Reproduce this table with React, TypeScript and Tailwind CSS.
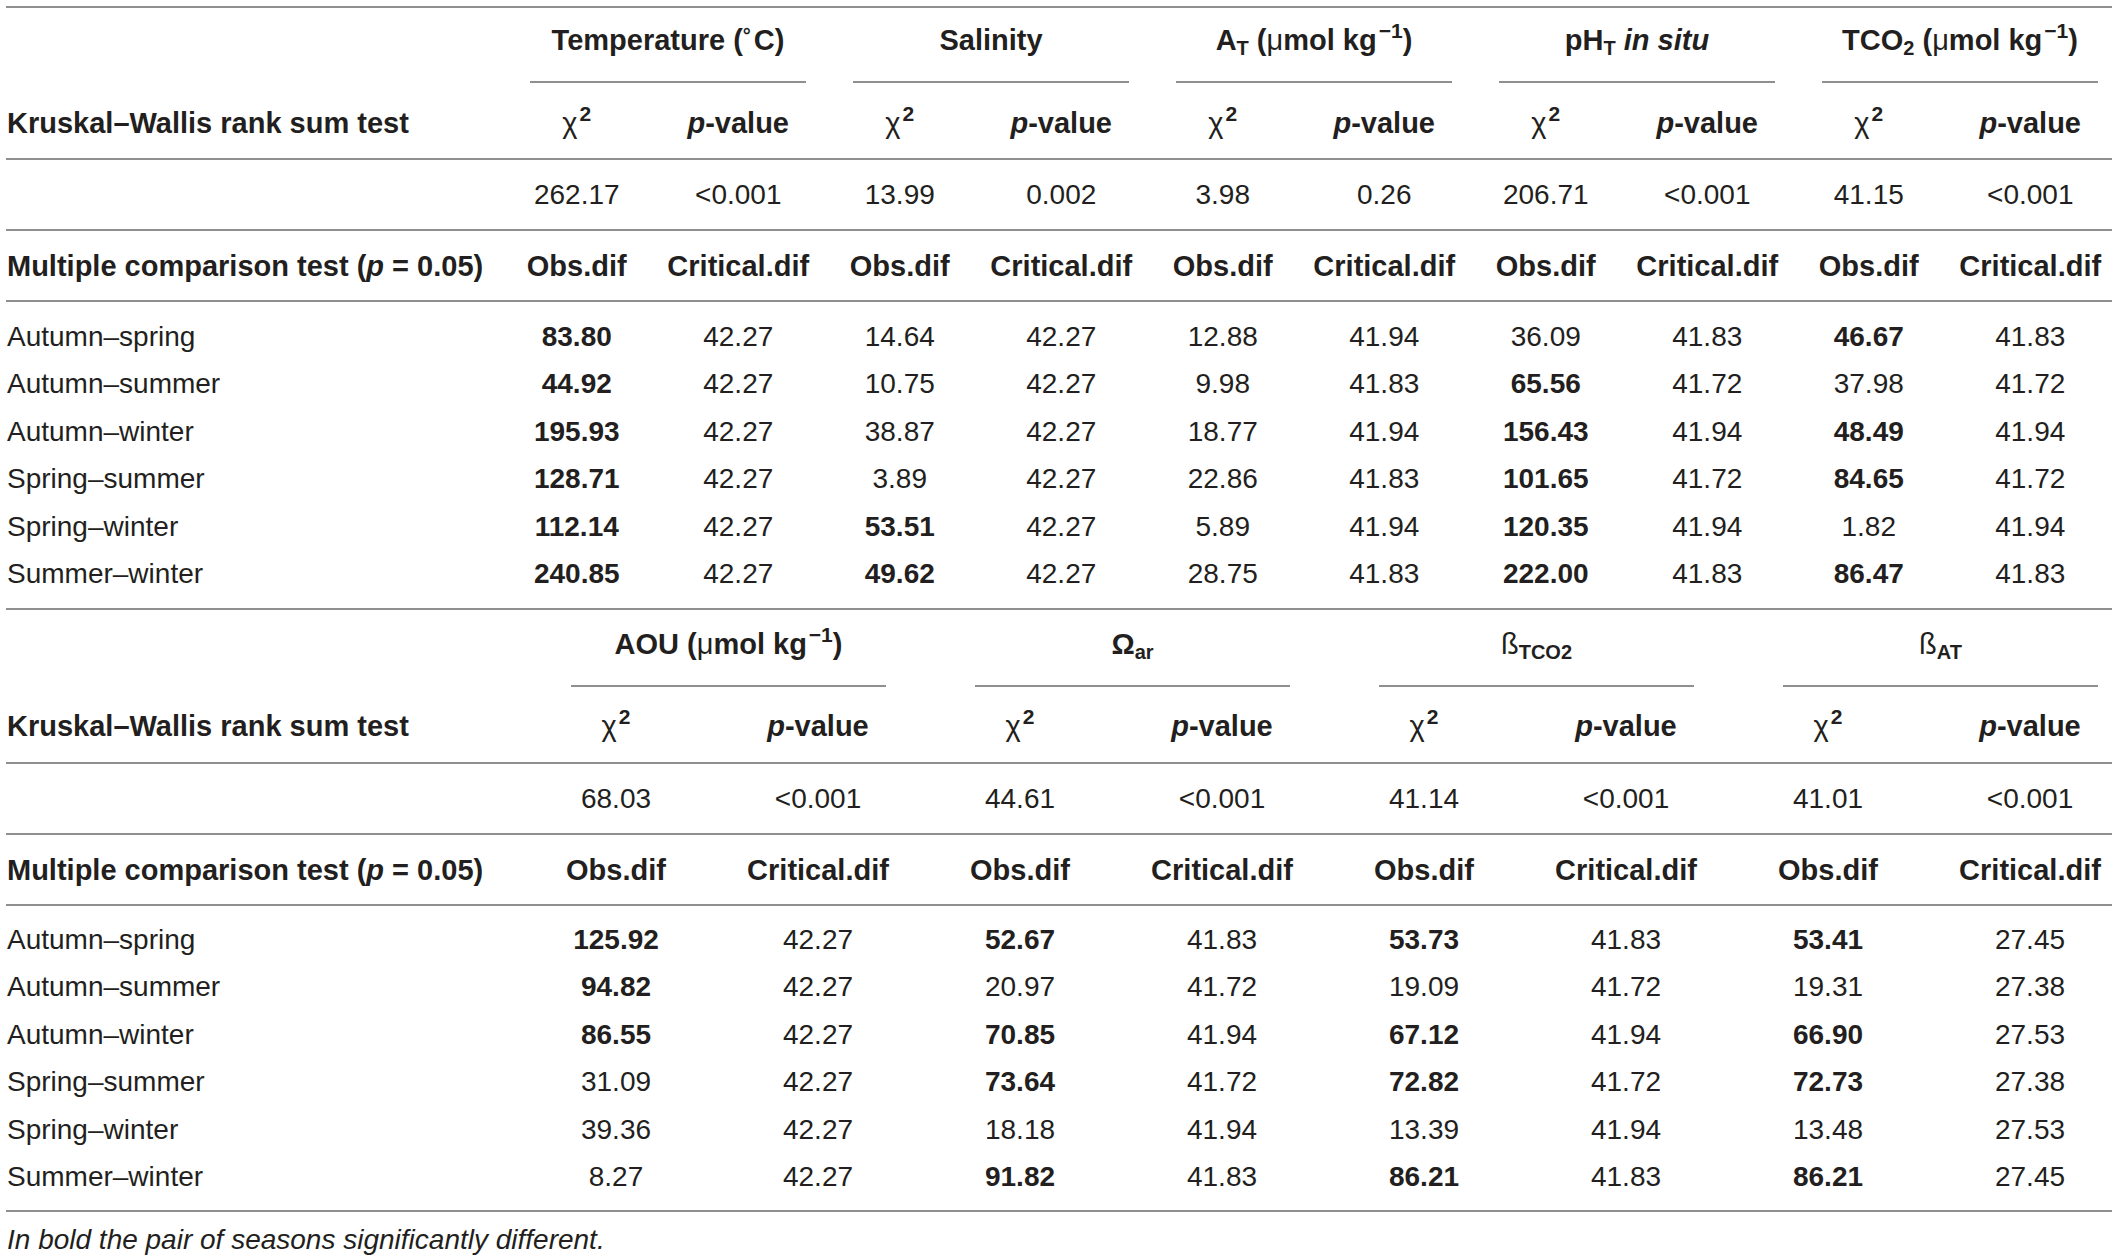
import type { ReactNode } from "react";

// "*" in front of a value = significant pair, printed bold
const kw1 = ["262.17", "<0.001", "13.99", "0.002", "3.98", "0.26", "206.71", "<0.001", "41.15", "<0.001"];
const rows1: [string, string[]][] = [
  ["Autumn–spring", ["*83.80", "42.27", "14.64", "42.27", "12.88", "41.94", "36.09", "41.83", "*46.67", "41.83"]],
  ["Autumn–summer", ["*44.92", "42.27", "10.75", "42.27", "9.98", "41.83", "*65.56", "41.72", "37.98", "41.72"]],
  ["Autumn–winter", ["*195.93", "42.27", "38.87", "42.27", "18.77", "41.94", "*156.43", "41.94", "*48.49", "41.94"]],
  ["Spring–summer", ["*128.71", "42.27", "3.89", "42.27", "22.86", "41.83", "*101.65", "41.72", "*84.65", "41.72"]],
  ["Spring–winter", ["*112.14", "42.27", "*53.51", "42.27", "5.89", "41.94", "*120.35", "41.94", "1.82", "41.94"]],
  ["Summer–winter", ["*240.85", "42.27", "*49.62", "42.27", "28.75", "41.83", "*222.00", "41.83", "*86.47", "41.83"]],
];

const kw2 = ["68.03", "<0.001", "44.61", "<0.001", "41.14", "<0.001", "41.01", "<0.001"];
const rows2: [string, string[]][] = [
  ["Autumn–spring", ["*125.92", "42.27", "*52.67", "41.83", "*53.73", "41.83", "*53.41", "27.45"]],
  ["Autumn–summer", ["*94.82", "42.27", "20.97", "41.72", "19.09", "41.72", "19.31", "27.38"]],
  ["Autumn–winter", ["*86.55", "42.27", "*70.85", "41.94", "*67.12", "41.94", "*66.90", "27.53"]],
  ["Spring–summer", ["31.09", "42.27", "*73.64", "41.72", "*72.82", "41.72", "*72.73", "27.38"]],
  ["Spring–winter", ["39.36", "42.27", "18.18", "41.94", "13.39", "41.94", "13.48", "27.53"]],
  ["Summer–winter", ["8.27", "42.27", "*91.82", "41.83", "*86.21", "41.83", "*86.21", "27.45"]],
];

const Sub = ({ children }: { children: ReactNode }) => (
  <sub className="text-[20px] relative top-[5px] align-baseline">{children}</sub>
);
const Sup = ({ children }: { children: ReactNode }) => (
  <sup className="text-[21px] relative -top-[12px] align-baseline ml-[2px]">{children}</sup>
);
const Mu = () => <span className="font-normal">μ</span>;

const Chi = () => (
  <span>
    <span className="font-normal">χ</span>
    <Sup>2</Sup>
  </span>
);
const PValue = () => (
  <span>
    <i>p</i>-value
  </span>
);

function Val({ v }: { v: string }) {
  const bold = v.startsWith("*");
  return (
    <div className={bold ? "text-center font-bold" : "text-center"}>
      {bold ? v.slice(1) : v}
    </div>
  );
}

function Group({ label, wide }: { label: ReactNode; wide?: boolean }) {
  return (
    <div className="col-span-2 flex flex-col justify-between h-full">
      <div className={wide ? "text-center font-bold pt-[17px] pl-[23px]" : "text-center font-bold pt-[15px] pl-[21px]"}>
        {label}
      </div>
      <div
        className={
          wide
            ? "h-[2px] bg-[#8f8f8f] ml-[56px] mr-[33px]"
            : "h-[2px] bg-[#8f8f8f] ml-[34px] mr-[13px]"
        }
      />
    </div>
  );
}

function Block({
  cols,
  groups,
  kw,
  rows,
  wide,
}: {
  cols: string;
  groups: ReactNode[];
  kw: string[];
  rows: [string, string[]][];
  wide?: boolean;
}) {
  const n = kw.length / 2;
  return (
    <>
      {/* group headers */}
      <div className={`${cols} text-[29px] ${wide ? "h-[77px]" : "h-[75px]"}`}>
        <div />
        {groups.map((g, i) => (
          <Group key={i} label={g} wide={wide} />
        ))}
      </div>

      {/* chi2 / p-value */}
      <div className={`${cols} items-center h-[77px] border-b-2 border-[#8f8f8f] font-bold text-[29px] ${wide ? "pt-[3px]" : "pt-[5px]"}`}>
        <div className="pl-[1px]">Kruskal–Wallis rank sum test</div>
        {Array.from({ length: n }).map((_, i) => [
          <div key={`c${i}`} className="text-center">
            <Chi />
          </div>,
          <div key={`p${i}`} className="text-center">
            <PValue />
          </div>,
        ])}
      </div>

      {/* KW values */}
      <div className={`${cols} items-center h-[71px] border-b-2 border-[#8f8f8f]`}>
        <div />
        {kw.map((v, i) => (
          <Val key={i} v={v} />
        ))}
      </div>

      {/* comparison header */}
      <div className={`${cols} items-center h-[71px] border-b-2 border-[#8f8f8f] font-bold text-[29px]`}>
        <div className="pl-[1px]">
          Multiple comparison test (<i>p</i> = 0.05)
        </div>
        {Array.from({ length: n }).map((_, i) => [
          <div key={`o${i}`} className="text-center">
            Obs.dif
          </div>,
          <div key={`c${i}`} className="text-center">
            Critical.dif
          </div>,
        ])}
      </div>

      {/* data */}
      <div className={`border-b-2 border-[#8f8f8f] ${wide ? "pt-[10px] pb-[9px]" : "pt-[11px] pb-[10px]"}`}>
        {rows.map(([name, vals]) => (
          <div key={name} className={`${cols} items-center h-[47.5px]`}>
            <div className="pl-[1px]">{name}</div>
            {vals.map((v, i) => (
              <Val key={i} v={v} />
            ))}
          </div>
        ))}
      </div>
    </>
  );
}

export default function App() {
  return (
    <div className="w-[2118px] h-[1260px] bg-white overflow-hidden pl-[6px] pt-[6px] font-['Liberation_Sans',Arial,sans-serif] text-[28px] leading-[34px] text-[#231f20]">
      <div className="w-[2106px] overflow-hidden border-t-2 border-[#8f8f8f]">
        <Block
          cols="grid grid-cols-[490px_repeat(10,161.5px)]"
          kw={kw1}
          rows={rows1}
          groups={[
            <span>
              Temperature (<span className="text-[20px] relative -top-[8px] mr-[3px]">°</span>C)
            </span>,
            <span>Salinity</span>,
            <span>
              A<Sub>T</Sub> (<Mu />
              mol kg<Sup>−1</Sup>)
            </span>,
            <span>
              pH<Sub>T</Sub> <i>in situ</i>
            </span>,
            <span>
              TCO<Sub>2</Sub> (<Mu />
              mol kg<Sup>−1</Sup>)
            </span>,
          ]}
        />
        <div className="w-[2125px]">
          <Block
            wide
            cols="grid grid-cols-[509px_repeat(8,202px)]"
            kw={kw2}
            rows={rows2}
            groups={[
              <span>
                AOU (<Mu />
                mol kg<Sup>−1</Sup>)
              </span>,
              <span>
                Ω<Sub>ar</Sub>
              </span>,
              <span>
                <span className="font-normal">ß</span>
                <Sub>TCO2</Sub>
              </span>,
              <span>
                <span className="font-normal">ß</span>
                <Sub>AT</Sub>
              </span>,
            ]}
          />
        </div>
      </div>
      <div className="mt-[11px] pl-[1px] italic">In bold the pair of seasons significantly different.</div>
    </div>
  );
}
